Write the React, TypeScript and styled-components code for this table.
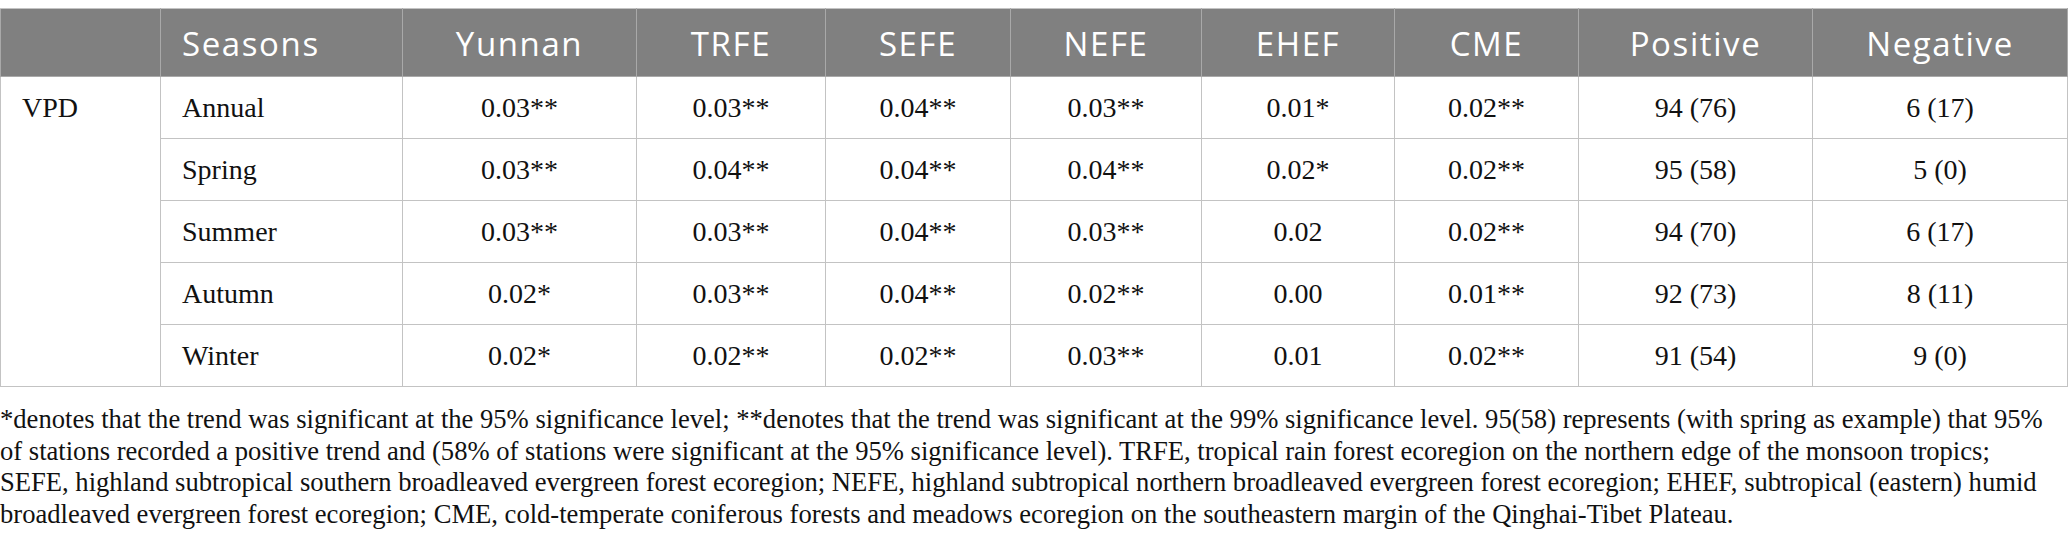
import { FC } from 'react';
import styled, { createGlobalStyle } from 'styled-components';

const GlobalStyle = createGlobalStyle`
    html, body {
        margin: 0;
        padding: 0;
        background: #ffffff;
    }
`

const columns = [
    { id: 'group', label: '', width: 160, left: true },
    { id: 'season', label: 'Seasons', width: 242, left: true },
    { id: 'yunnan', label: 'Yunnan', width: 234 },
    { id: 'trfe', label: 'TRFE', width: 189 },
    { id: 'sefe', label: 'SEFE', width: 185 },
    { id: 'nefe', label: 'NEFE', width: 191 },
    { id: 'ehef', label: 'EHEF', width: 193 },
    { id: 'cme', label: 'CME', width: 184 },
    { id: 'positive', label: 'Positive', width: 234 },
    { id: 'negative', label: 'Negative', width: 255 },
]

const rows = [
    ['Annual', '0.03**', '0.03**', '0.04**', '0.03**', '0.01*', '0.02**', '94 (76)', '6 (17)'],
    ['Spring', '0.03**', '0.04**', '0.04**', '0.04**', '0.02*', '0.02**', '95 (58)', '5 (0)'],
    ['Summer', '0.03**', '0.03**', '0.04**', '0.03**', '0.02', '0.02**', '94 (70)', '6 (17)'],
    ['Autumn', '0.02*', '0.03**', '0.04**', '0.02**', '0.00', '0.01**', '92 (73)', '8 (11)'],
    ['Winter', '0.02*', '0.02**', '0.02**', '0.03**', '0.01', '0.02**', '91 (54)', '9 (0)'],
]

const footnoteLines = [
    '*denotes that the trend was significant at the 95% significance level; **denotes that the trend was significant at the 99% significance level. 95(58) represents (with spring as example) that 95%',
    'of stations recorded a positive trend and (58% of stations were significant at the 95% significance level). TRFE, tropical rain forest ecoregion on the northern edge of the monsoon tropics;',
    'SEFE, highland subtropical southern broadleaved evergreen forest ecoregion; NEFE, highland subtropical northern broadleaved evergreen forest ecoregion; EHEF, subtropical (eastern) humid',
    'broadleaved evergreen forest ecoregion; CME, cold-temperate coniferous forests and meadows ecoregion on the southeastern margin of the Qinghai-Tibet Plateau.',
]

const App: FC = () => {
    return (
        <StyledPage>
            <GlobalStyle />
            <StyledTable>
                <colgroup>
                    {columns.map((column) => (
                        <col key={column.id} style={{ width: column.width }} />
                    ))}
                </colgroup>
                <thead>
                    <StyledHeadRow>
                        {columns.map((column) => (
                            <StyledHeadCell key={column.id} $left={column.left}>{column.label}</StyledHeadCell>
                        ))}
                    </StyledHeadRow>
                </thead>
                <tbody>
                    {rows.map((row, index) => (
                        <StyledRow key={row[0]}>
                            {index === 0 && <StyledGroupCell rowSpan={rows.length}>VPD</StyledGroupCell>}
                            {row.map((value, i) => (
                                <StyledCell key={i} $left={i === 0}>{value}</StyledCell>
                            ))}
                        </StyledRow>
                    ))}
                </tbody>
            </StyledTable>
            <StyledFootnote>
                {footnoteLines.map((line) => (
                    <StyledFootLine key={line}>{line}</StyledFootLine>
                ))}
            </StyledFootnote>
        </StyledPage>
    )
}

const StyledPage = styled.div`
    padding-top: 8px;
    width: 2068px;
`

const StyledTable = styled.table`
    width: 2068px;
    table-layout: fixed;
    border-collapse: collapse;
    border: 1px solid #c3c3c3;
`

const StyledHeadRow = styled.tr`
    height: 68px;
    background: #808080;
`

const StyledHeadCell = styled.th<{ $left?: boolean }>`
    border: 1px solid #a9a9a9;
    border-top-color: #c3c3c3;
    padding: 0 21px;
    font-family: "Open Sans", "Noto Sans", sans-serif;
    font-weight: 400;
    font-size: 33px;
    letter-spacing: 1.6px;
    color: #ffffff;
    text-align: ${(props) => (props.$left ? 'left' : 'center')};
    vertical-align: middle;
    white-space: nowrap;
    padding-top: 2px;
`

const StyledRow = styled.tr`
    height: 62px;
`

const StyledCell = styled.td<{ $left?: boolean }>`
    border: 1px solid #c3c3c3;
    padding: 0 21px;
    font-family: "Liberation Serif", "DejaVu Serif", serif;
    font-size: 28px;
    color: #111111;
    text-align: ${(props) => (props.$left ? 'left' : 'center')};
    vertical-align: middle;
    white-space: nowrap;
`

const StyledGroupCell = styled(StyledCell)`
    text-align: left;
    vertical-align: top;
    line-height: 61px;
`

const StyledFootnote = styled.div`
    margin-top: 17px;
    font-family: "Liberation Serif", "DejaVu Serif", serif;
    font-size: 26.6px;
    line-height: 31.6px;
    color: #111111;
`

const StyledFootLine = styled.div`
    white-space: nowrap;
`

export default App
